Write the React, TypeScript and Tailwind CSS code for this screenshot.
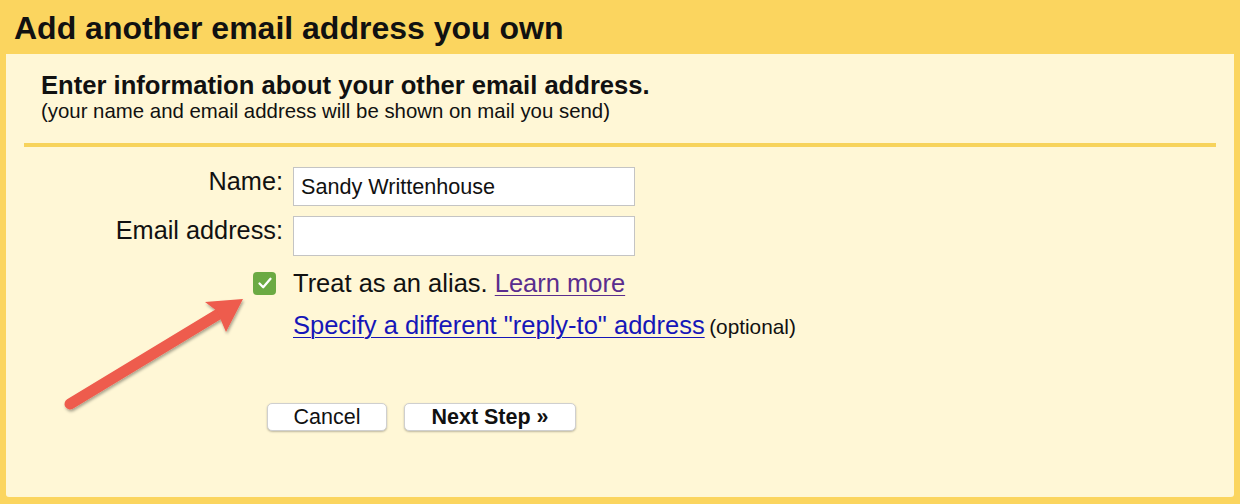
import React from "react";

export default function App() {
  const font = { fontFamily: '"Liberation Sans", Arial, sans-serif' };
  return (
    <div
      className="relative w-[1240px] h-[504px] bg-[#FBD55F] px-[6px] pb-[7px] flex flex-col overflow-hidden"
      style={font}
    >
      <div className="h-[54px] pt-[8px] pl-[8px] text-[32px] leading-[40px] font-bold text-[#111]">
        Add another email address you own
      </div>
      <div className="flex-1 bg-[#FFF7D6] rounded-b-[3px] flex flex-col">
        <div className="pt-[17px] pl-[35px] text-[#111]">
          <div className="text-[25.6px] leading-[28px] font-bold">
            Enter information about your other email address.
          </div>
          <div className="text-[20.4px] leading-[24px]">
            (your name and email address will be shown on mail you send)
          </div>
        </div>
        <div className="mt-[20px] mx-[18px] h-[4px] bg-[#F7D35C]" />

        <div className="mt-[20px] flex items-start">
          <div className="w-[277px] text-right text-[25.3px] leading-[28px] text-[#111]">
            Name:
          </div>
          <input
            readOnly
            value="Sandy Writtenhouse"
            className="ml-[10px] w-[342px] h-[39px] bg-white border border-[#c4c4c4] pl-[7px] text-[21.6px] text-[#111] outline-none"
            style={font}
          />
        </div>
        <div className="mt-[10px] flex items-start">
          <div className="w-[277px] text-right text-[25.3px] leading-[28px] text-[#111]">
            Email address:
          </div>
          <input
            readOnly
            value=""
            className="ml-[10px] w-[342px] h-[40px] bg-white border border-[#c4c4c4] pl-[7px] text-[21.6px] text-[#111] outline-none"
            style={font}
          />
        </div>

        <div className="mt-[12px] h-[30px] flex items-center pl-[247px]">
          <div className="w-[23px] h-[23px] rounded-[4px] bg-[#6BAA43] flex items-center justify-center">
            <svg width="16" height="14" viewBox="0 0 16 14">
              <path
                d="M2.5 7.5 L6.2 11.2 L13.5 2.8"
                fill="none"
                stroke="white"
                strokeWidth="2.3"
                strokeLinecap="round"
                strokeLinejoin="round"
              />
            </svg>
          </div>
          <div className="ml-[17px] text-[25.5px] leading-[30px] text-[#111]">
            Treat as an alias.{" "}
            <span className="text-[#5A2D8E] underline decoration-1 underline-offset-[3px]">
              Learn more
            </span>
          </div>
        </div>

        <div className="mt-[12px] pl-[287px] leading-[30px] text-[#111]">
          <span className="text-[25.5px] text-[#1616B8] underline decoration-1 underline-offset-[3px]">
            Specify a different "reply-to" address
          </span>{" "}
          <span className="text-[20.8px]">(optional)</span>
        </div>

        <div className="mt-[59px] pl-[261px] flex gap-[17px]">
          <div className="w-[120px] h-[28px] bg-white border border-[#cfcfcf] rounded-[5px] shadow-[0_1px_2px_rgba(0,0,0,0.25)] flex items-center justify-center text-[21.5px] text-[#111]">
            Cancel
          </div>
          <div className="w-[172px] h-[28px] bg-white border border-[#cfcfcf] rounded-[5px] shadow-[0_1px_2px_rgba(0,0,0,0.25)] flex items-center justify-center text-[21.5px] font-bold text-[#111]">
            Next Step »
          </div>
        </div>
      </div>

      <svg
        className="absolute left-0 top-0 pointer-events-none"
        width="1240"
        height="504"
        viewBox="0 0 1240 504"
      >
        <defs>
          <filter id="sh" x="-20%" y="-20%" width="140%" height="140%">
            <feDropShadow dx="1" dy="2" stdDeviation="1.5" floodColor="#000" floodOpacity="0.35" />
          </filter>
        </defs>
        <g filter="url(#sh)">
          <line
            x1="70"
            y1="404"
            x2="222"
            y2="312"
            stroke="#EE5B4D"
            strokeWidth="11"
            strokeLinecap="round"
          />
          <path d="M243 299 L205 302 L217 311 L226 332 Z" fill="#EE5B4D" />
        </g>
      </svg>
    </div>
  );
}
